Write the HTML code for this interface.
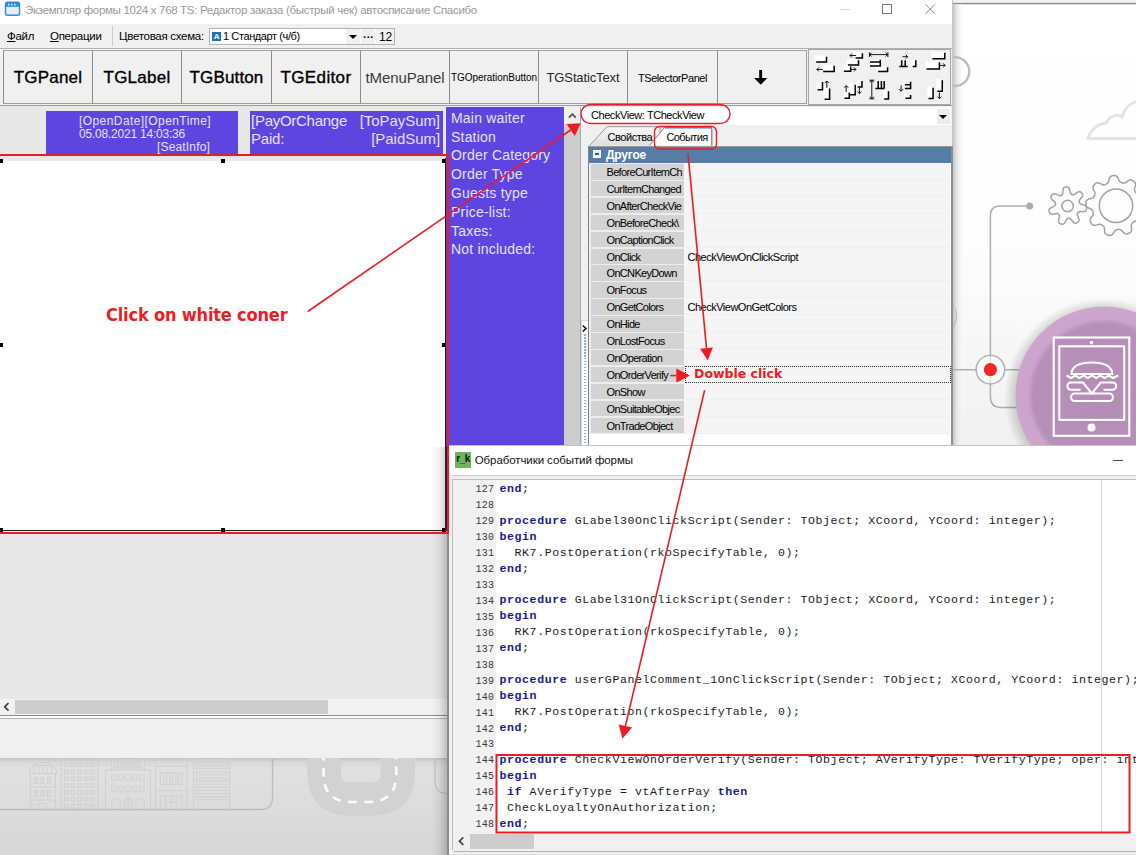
<!DOCTYPE html>
<html lang="ru">
<head>
<meta charset="utf-8">
<title>Экземпляр формы</title>
<style>
*{box-sizing:border-box;margin:0;padding:0}
html,body{width:1136px;height:855px;overflow:hidden;background:#e9e9e9;font-family:"Liberation Sans","DejaVu Sans",sans-serif;font-size:12px;color:#000}
.abs{position:absolute}
#stage{position:relative;width:1136px;height:855px;overflow:hidden;background:#e6e6e6}
/* ---------- background ---------- */
#bgR{left:952px;top:0;width:184px;height:450px;background:linear-gradient(#ffffff 0,#ffffff 55%,#f1f1f1 100%)}
#bgB{left:0;top:757px;width:450px;height:98px;background:linear-gradient(#e4e4e4,#d9d9d9)}
/* ---------- window 1 ---------- */
#w1{left:0;top:0;width:952.500px;height:757.500px;background:#f0f0f0;border-right:1px solid #c6c6c6}
#title1{left:0;top:0;width:952px;height:24px;background:#fff;color:#999;font-size:11.5px;line-height:20px;white-space:nowrap}
#menu1{left:0;top:24px;width:952px;height:24px;background:#f0f0f0;font-size:11.5px;letter-spacing:-0.28px;line-height:25.400px;white-space:nowrap}
.tb{top:50px;height:54px;padding-top:1.2px;border:1px solid #a0a0a0;border-left-color:#8c8c8c;background:#f0f0f0;text-align:center;white-space:nowrap;overflow:hidden;line-height:52px}
.pp{background:#5f45e0;color:#e4e0ff;white-space:nowrap;overflow:hidden}
/* property grid */
.gr{left:591px;width:359px;height:17px;white-space:nowrap}
.gr .k{position:absolute;left:0;top:0;width:93px;height:15.500px;background:#d3d3d3;overflow:hidden;font-size:11px;line-height:16px;padding-left:15.500px;letter-spacing:-0.67px}
.gr .v{position:absolute;left:93px;top:-1px;width:266px;height:17px;background:#f5f5f5;font-size:11px;line-height:18px;padding-left:3.500px;letter-spacing:-0.5px;border-bottom:1px solid #efefef}
/* ---------- window 2 ---------- */
#w2{left:447px;top:445px;width:689px;height:410px;background:#fff;border-left:2px solid #8c8c8c;border-top:1px solid #c4c4c4}
#code{left:4px;top:34px;width:684px;height:354px;font-family:"Liberation Mono","DejaVu Sans Mono",monospace;font-size:11.6px;letter-spacing:0.568px;line-height:16px;white-space:pre;overflow:hidden;color:#1a1a1a}
#code .l{position:absolute;left:0;height:16px;width:700px}
#code .n{position:absolute;left:0;top:1.5px;width:41.3px;text-align:right;font-size:10px;letter-spacing:0.3px;color:#3a3a3a}
#code .c{position:absolute;left:46.5px}
#code b{color:#1a1a8c;font-weight:bold}
svg{position:absolute;left:0;top:0;overflow:visible}
</style>
</head>
<body>
<div id="stage">
<!--BG-->
<div id="bgR" class="abs"></div>
<svg width="1136" height="855" viewBox="0 0 1136 855">
<defs><linearGradient id="gsh" x1="0" x2="1" y1="0" y2="0"><stop offset="0" stop-color="#bdbdbd"/><stop offset="0.35" stop-color="#e4e4e4"/><stop offset="1" stop-color="#ffffff" stop-opacity="0"/></linearGradient><radialGradient id="gpc" cx="0.5" cy="0.5" r="0.5"><stop offset="0" stop-color="#b48db5"/><stop offset="0.8" stop-color="#b690b8"/><stop offset="0.86" stop-color="#cba3cc"/><stop offset="1" stop-color="#cda6ce"/></radialGradient><radialGradient id="gps" cx="0.5" cy="0.5" r="0.5"><stop offset="0.8" stop-color="#000" stop-opacity="0.28"/><stop offset="1" stop-color="#000" stop-opacity="0"/></radialGradient><linearGradient id="gbr" x1="0" x2="0" y1="0" y2="1"><stop offset="0" stop-color="#ffffff"/><stop offset="0.55" stop-color="#fdfdfd"/><stop offset="1" stop-color="#f1f1f1"/></linearGradient></defs>
<rect x="952" y="0" width="184" height="446" fill="url(#gbr)"/>
<rect x="952" y="0" width="184" height="3" fill="#f0f0f0"/><rect x="952" y="2.900" width="184" height="1.400" fill="#8a8a8a"/>
<rect x="952" y="4.300" width="13" height="442" fill="url(#gsh)"/>
<circle cx="954.900" cy="71.600" r="14.400" fill="none" stroke="#b8babc" stroke-width="2.3"/>
<circle cx="940" cy="316" r="16.500" fill="none" stroke="#c4c4c4" stroke-width="1.5"/>
<path d="M1140 138.500H1087.500C1092 129 1098 123 1106 123.500C1109 116 1117 113.500 1122 117C1125 107 1132 101.500 1140 101" fill="none" stroke="#e3e3e3" stroke-width="2.800" stroke-linejoin="round"/>
<path d="M1085.9 206.0L1086.2 206.3L1086.4 206.7L1086.5 207.0L1086.6 207.3L1086.6 207.7L1086.7 208.0L1086.6 208.3L1086.6 208.7L1086.6 209.0L1086.5 209.3L1086.4 209.7L1086.3 210.0L1086.1 210.3L1085.9 210.6L1085.7 210.8L1085.4 211.1L1085.0 211.3L1084.5 211.5L1083.9 211.6L1083.2 211.7L1082.4 211.7L1081.6 211.7L1080.9 211.6L1080.3 211.6L1079.8 211.7L1079.3 211.7L1079.0 211.8L1078.8 211.9L1078.5 212.1L1078.4 212.2L1078.2 212.4L1078.1 212.5L1077.9 212.7L1077.8 212.9L1077.7 213.1L1077.6 213.2L1077.5 213.4L1077.4 213.7L1077.3 213.9L1077.3 214.1L1077.3 214.4L1077.3 214.8L1077.4 215.2L1077.6 215.7L1077.8 216.2L1078.1 216.9L1078.4 217.6L1078.7 218.3L1078.9 219.0L1079.0 219.6L1079.1 220.1L1079.0 220.6L1078.9 221.0L1078.7 221.3L1078.5 221.6L1078.3 221.8L1078.0 222.1L1077.8 222.3L1077.5 222.5L1077.2 222.6L1076.9 222.8L1076.6 222.9L1076.3 223.0L1076.0 223.1L1075.6 223.2L1075.2 223.2L1074.9 223.1L1074.5 223.0L1074.0 222.8L1073.6 222.4L1073.1 221.9L1072.6 221.4L1072.1 220.7L1071.7 220.1L1071.2 219.6L1070.9 219.2L1070.6 218.9L1070.3 218.6L1070.0 218.5L1069.8 218.4L1069.5 218.3L1069.3 218.3L1069.1 218.2L1068.9 218.2L1068.7 218.3L1068.5 218.3L1068.2 218.3L1068.0 218.3L1067.8 218.4L1067.6 218.5L1067.4 218.6L1067.2 218.7L1066.9 218.9L1066.7 219.2L1066.4 219.6L1066.1 220.1L1065.8 220.7L1065.4 221.4L1065.1 222.1L1064.7 222.7L1064.3 223.2L1063.9 223.6L1063.5 223.9L1063.1 224.1L1062.7 224.2L1062.4 224.2L1062.0 224.2L1061.7 224.2L1061.4 224.1L1061.0 224.0L1060.7 223.9L1060.4 223.8L1060.1 223.7L1059.8 223.5L1059.5 223.3L1059.3 223.1L1059.0 222.8L1058.8 222.5L1058.7 222.1L1058.5 221.7L1058.5 221.1L1058.5 220.5L1058.6 219.8L1058.8 219.0L1059.0 218.3L1059.2 217.6L1059.3 217.0L1059.4 216.5L1059.4 216.1L1059.4 215.8L1059.3 215.5L1059.2 215.3L1059.1 215.1L1059.0 214.9L1058.9 214.7L1058.7 214.5L1058.6 214.4L1058.5 214.2L1058.3 214.1L1058.1 214.0L1057.9 213.8L1057.7 213.7L1057.5 213.6L1057.2 213.6L1056.8 213.5L1056.4 213.5L1055.9 213.6L1055.2 213.7L1054.5 213.9L1053.8 214.0L1053.0 214.1L1052.3 214.1L1051.7 214.1L1051.2 214.0L1050.8 213.8L1050.5 213.6L1050.2 213.4L1050.0 213.1L1049.8 212.8L1049.6 212.6L1049.5 212.2L1049.3 211.9L1049.2 211.6L1049.2 211.3L1049.1 211.0L1049.1 210.6L1049.1 210.3L1049.1 209.9L1049.2 209.6L1049.3 209.2L1049.5 208.9L1049.9 208.5L1050.4 208.1L1050.9 207.8L1051.6 207.4L1052.3 207.1L1053.0 206.8L1053.6 206.5L1054.1 206.2L1054.4 206.0L1054.7 205.8L1054.9 205.6L1055.1 205.3L1055.2 205.1L1055.3 204.9L1055.3 204.7L1055.4 204.5L1055.4 204.3L1055.4 204.1L1055.5 203.9L1055.5 203.6L1055.5 203.4L1055.4 203.2L1055.4 203.0L1055.3 202.7L1055.1 202.4L1054.9 202.1L1054.5 201.7L1054.1 201.3L1053.6 200.9L1053.0 200.4L1052.4 199.9L1051.9 199.3L1051.5 198.8L1051.2 198.4L1051.0 197.9L1051.0 197.5L1050.9 197.1L1051.0 196.8L1051.1 196.5L1051.2 196.1L1051.3 195.8L1051.5 195.5L1051.7 195.3L1051.9 195.0L1052.1 194.7L1052.3 194.5L1052.6 194.3L1052.8 194.1L1053.2 193.9L1053.5 193.8L1053.9 193.7L1054.4 193.7L1054.9 193.8L1055.6 194.0L1056.2 194.2L1056.9 194.6L1057.6 194.9L1058.2 195.2L1058.8 195.5L1059.2 195.7L1059.6 195.8L1059.9 195.8L1060.2 195.8L1060.4 195.8L1060.7 195.7L1060.9 195.6L1061.1 195.6L1061.3 195.5L1061.4 195.3L1061.6 195.2L1061.8 195.1L1062.0 195.0L1062.1 194.8L1062.3 194.6L1062.4 194.4L1062.6 194.1L1062.7 193.8L1062.7 193.3L1062.8 192.8L1062.8 192.1L1062.9 191.4L1062.9 190.6L1063.0 189.9L1063.1 189.2L1063.3 188.6L1063.5 188.2L1063.7 187.8L1064.0 187.6L1064.3 187.3L1064.6 187.2L1064.9 187.1L1065.3 187.0L1065.6 186.9L1065.9 186.9L1066.3 186.8L1066.6 186.8L1066.9 186.9L1067.3 186.9L1067.6 187.0L1067.9 187.1L1068.3 187.3L1068.6 187.5L1068.9 187.8L1069.2 188.3L1069.4 188.8L1069.6 189.5L1069.8 190.2L1070.0 191.0L1070.1 191.7L1070.3 192.3L1070.4 192.8L1070.5 193.2L1070.7 193.5L1070.9 193.8L1071.1 194.0L1071.2 194.1L1071.4 194.2L1071.6 194.3L1071.8 194.4L1072.0 194.5L1072.2 194.6L1072.4 194.7L1072.6 194.7L1072.8 194.7L1073.1 194.8L1073.3 194.8L1073.6 194.7L1073.9 194.6L1074.3 194.4L1074.7 194.1L1075.2 193.8L1075.8 193.4L1076.4 192.9L1077.1 192.5L1077.7 192.1L1078.3 191.9L1078.8 191.7L1079.2 191.6L1079.6 191.7L1080.0 191.7L1080.3 191.9L1080.6 192.0L1080.9 192.2L1081.2 192.4L1081.4 192.7L1081.6 192.9L1081.9 193.2L1082.1 193.4L1082.3 193.7L1082.4 194.0L1082.5 194.3L1082.6 194.7L1082.7 195.0L1082.6 195.5L1082.5 195.9L1082.3 196.5L1082.0 197.0L1081.5 197.6L1081.0 198.2L1080.6 198.8L1080.1 199.3L1079.8 199.8L1079.5 200.2L1079.3 200.5L1079.2 200.8L1079.2 201.1L1079.2 201.3L1079.2 201.6L1079.2 201.8L1079.2 202.0L1079.3 202.2L1079.4 202.4L1079.4 202.6L1079.5 202.8L1079.6 203.0L1079.7 203.2L1079.9 203.4L1080.1 203.6L1080.3 203.8L1080.7 203.9L1081.1 204.1L1081.6 204.3L1082.3 204.5L1083.0 204.7L1083.7 204.9L1084.5 205.1L1085.1 205.4L1085.6 205.7z" fill="none" stroke="#9fa1a3" stroke-width="1.5"/><circle cx="1067.600" cy="206" r="5.700" fill="none" stroke="#9fa1a3" stroke-width="1.5"/>
<path d="M1140.2 205.8L1140.0 206.2L1139.9 206.6L1139.8 207.0L1139.8 207.5L1139.7 207.9L1139.7 208.3L1139.7 208.7L1139.7 209.1L1139.7 209.6L1139.8 210.0L1140.0 210.5L1140.3 211.0L1140.8 211.5L1141.4 212.1L1142.1 212.8L1142.8 213.5L1143.4 214.2L1143.8 214.8L1144.0 215.5L1144.1 216.0L1144.1 216.6L1144.0 217.1L1143.9 217.6L1143.7 218.1L1143.5 218.6L1143.2 219.1L1143.0 219.5L1142.7 220.0L1142.3 220.4L1141.9 220.8L1141.4 221.1L1140.8 221.3L1140.0 221.4L1139.1 221.4L1138.2 221.3L1137.2 221.2L1136.3 221.1L1135.6 221.1L1135.0 221.2L1134.5 221.3L1134.1 221.6L1133.8 221.8L1133.4 222.1L1133.1 222.3L1132.8 222.6L1132.5 222.9L1132.3 223.2L1132.0 223.6L1131.8 223.9L1131.5 224.3L1131.4 224.8L1131.3 225.4L1131.3 226.1L1131.4 227.0L1131.5 228.0L1131.6 228.9L1131.6 229.8L1131.5 230.6L1131.3 231.2L1131.0 231.7L1130.6 232.1L1130.2 232.5L1129.7 232.8L1129.3 233.0L1128.8 233.3L1128.3 233.5L1127.8 233.7L1127.3 233.8L1126.8 233.9L1126.2 233.9L1125.7 233.8L1125.0 233.6L1124.4 233.2L1123.7 232.6L1123.0 231.9L1122.3 231.2L1121.7 230.6L1121.2 230.1L1120.7 229.8L1120.2 229.6L1119.8 229.5L1119.3 229.5L1118.9 229.5L1118.5 229.5L1118.1 229.5L1117.7 229.6L1117.2 229.6L1116.8 229.7L1116.4 229.8L1116.0 230.0L1115.6 230.3L1115.1 230.6L1114.7 231.2L1114.2 231.9L1113.6 232.7L1113.1 233.6L1112.5 234.3L1111.9 234.8L1111.4 235.1L1110.8 235.3L1110.3 235.3L1109.7 235.3L1109.2 235.3L1108.7 235.2L1108.2 235.1L1107.7 234.9L1107.2 234.7L1106.7 234.5L1106.2 234.2L1105.8 233.9L1105.4 233.5L1105.0 232.9L1104.8 232.2L1104.6 231.3L1104.6 230.3L1104.5 229.3L1104.5 228.5L1104.3 227.8L1104.1 227.2L1103.9 226.7L1103.6 226.4L1103.3 226.1L1103.0 225.8L1102.7 225.5L1102.3 225.3L1102.0 225.1L1101.6 224.8L1101.3 224.6L1100.9 224.5L1100.5 224.3L1100.0 224.3L1099.4 224.3L1098.7 224.4L1097.8 224.6L1096.9 224.9L1095.9 225.2L1095.0 225.3L1094.3 225.4L1093.6 225.2L1093.1 225.0L1092.6 224.7L1092.2 224.4L1091.8 224.0L1091.5 223.6L1091.2 223.2L1090.9 222.7L1090.6 222.3L1090.4 221.8L1090.2 221.3L1090.1 220.8L1090.1 220.2L1090.2 219.5L1090.5 218.8L1090.9 218.0L1091.5 217.2L1092.1 216.5L1092.6 215.7L1092.9 215.1L1093.2 214.6L1093.3 214.1L1093.3 213.6L1093.3 213.2L1093.2 212.8L1093.1 212.4L1093.0 212.0L1092.9 211.6L1092.8 211.2L1092.6 210.8L1092.4 210.4L1092.2 210.0L1091.8 209.6L1091.4 209.3L1090.8 208.9L1090.0 208.5L1089.1 208.2L1088.2 207.7L1087.4 207.3L1086.8 206.8L1086.4 206.3L1086.1 205.8L1085.9 205.3L1085.8 204.7L1085.8 204.2L1085.8 203.7L1085.8 203.2L1085.9 202.6L1086.0 202.1L1086.1 201.6L1086.3 201.1L1086.5 200.6L1086.9 200.1L1087.4 199.7L1088.1 199.4L1088.9 199.0L1089.9 198.8L1090.8 198.6L1091.7 198.4L1092.4 198.1L1092.9 197.8L1093.3 197.5L1093.6 197.2L1093.8 196.8L1094.1 196.5L1094.2 196.1L1094.4 195.7L1094.6 195.4L1094.8 195.0L1094.9 194.6L1095.0 194.2L1095.1 193.7L1095.0 193.2L1094.9 192.6L1094.7 191.9L1094.3 191.2L1093.8 190.3L1093.4 189.4L1093.1 188.5L1093.0 187.8L1093.0 187.1L1093.1 186.6L1093.3 186.1L1093.6 185.6L1093.9 185.2L1094.2 184.8L1094.6 184.4L1095.0 184.0L1095.4 183.7L1095.8 183.4L1096.3 183.1L1096.8 182.9L1097.3 182.8L1098.0 182.8L1098.7 182.9L1099.6 183.2L1100.5 183.6L1101.4 184.1L1102.1 184.5L1102.8 184.7L1103.4 184.8L1103.9 184.9L1104.4 184.8L1104.8 184.7L1105.2 184.6L1105.6 184.4L1105.9 184.2L1106.3 184.0L1106.7 183.9L1107.0 183.6L1107.4 183.4L1107.7 183.1L1108.0 182.7L1108.3 182.2L1108.6 181.5L1108.8 180.6L1109.0 179.7L1109.2 178.7L1109.6 177.9L1109.9 177.2L1110.3 176.7L1110.8 176.3L1111.3 176.1L1111.8 175.9L1112.3 175.8L1112.8 175.7L1113.4 175.6L1113.9 175.6L1114.4 175.6L1114.9 175.6L1115.5 175.7L1116.0 175.9L1116.5 176.2L1117.0 176.6L1117.5 177.2L1117.9 178.0L1118.4 178.9L1118.7 179.8L1119.1 180.6L1119.5 181.2L1119.8 181.6L1120.2 182.0L1120.6 182.2L1121.0 182.4L1121.4 182.6L1121.8 182.7L1122.2 182.8L1122.6 182.9L1123.0 183.0L1123.4 183.1L1123.8 183.1L1124.3 183.1L1124.8 183.0L1125.3 182.7L1125.9 182.4L1126.7 181.9L1127.4 181.3L1128.2 180.7L1129.0 180.3L1129.7 180.0L1130.4 179.9L1131.0 179.9L1131.5 180.0L1132.0 180.2L1132.5 180.4L1132.9 180.7L1133.4 181.0L1133.8 181.3L1134.2 181.6L1134.6 182.0L1134.9 182.4L1135.2 182.9L1135.4 183.4L1135.6 184.1L1135.5 184.8L1135.4 185.7L1135.1 186.7L1134.8 187.6L1134.6 188.5L1134.5 189.2L1134.5 189.8L1134.5 190.3L1134.7 190.7L1134.8 191.1L1135.0 191.4L1135.3 191.8L1135.5 192.1L1135.7 192.5L1136.0 192.8L1136.3 193.1L1136.6 193.4L1136.9 193.7L1137.4 193.9L1138.0 194.1L1138.7 194.3L1139.5 194.3L1140.5 194.4L1141.5 194.4L1142.4 194.6L1143.1 194.8L1143.7 195.2L1144.1 195.6L1144.4 196.0L1144.7 196.5L1144.9 197.0L1145.1 197.5L1145.3 198.0L1145.4 198.5L1145.5 199.0L1145.5 199.5L1145.5 200.1L1145.5 200.6L1145.3 201.2L1145.0 201.7L1144.5 202.3L1143.8 202.9L1142.9 203.4L1142.1 204.0L1141.4 204.5L1140.8 204.9L1140.5 205.4z" fill="none" stroke="#9fa1a3" stroke-width="1.5"/><circle cx="1116" cy="205.800" r="16.700" fill="none" stroke="#9fa1a3" stroke-width="1.5"/>
<path d="M1029.700 206H1000Q990.400 206 990.400 216V397Q990.400 407.500 1001 407.500H1020" fill="none" stroke="#adb0b2" stroke-width="1.5"/>
<circle cx="1029.700" cy="206" r="3.500" fill="#a9abad"/>
<path d="M952 369.700H976M1005 369.700H1020" stroke="#adb0b2" stroke-width="1.4"/>
<circle cx="990.400" cy="369.700" r="14.300" fill="#fff" fill-opacity="0.6" stroke="#adb0b2" stroke-width="1.4"/><circle cx="990.400" cy="369.700" r="6.600" fill="#ee2a24"/>
<circle cx="1104" cy="398" r="100" fill="url(#gps)"/>
<circle cx="1104" cy="395" r="88.500" fill="url(#gpc)"/>
<g fill="none" stroke="#fff" stroke-width="2.1"><rect x="1053.700" y="337.500" width="75.600" height="98.300"/><rect x="1059.300" y="346.300" width="64.900" height="73.600"/><path d="M1071.500 374Q1072 362.500 1091.800 362.500Q1111.600 362.500 1112.300 374z"/><path d="M1066.500 375.500l4.500 2.500 4.200-2.300 4.200 2.300 4.200-2.300 4.200 2.300 4.200-2.300 4.200 2.300 4.200-2.300 4.200 2.300 4.200-2.300 4.500 2.300 5-2.700"/><path d="M1071 382.500h12l8.800 11 8.800-11h12a3.600 3.600 0 0 1 0 7.200h-9M1071 382.500a3.600 3.600 0 0 0 0 7.200h9.500"/><rect x="1071" y="393.500" width="42" height="7.500" rx="3.700"/></g>
<circle cx="1091.500" cy="342.600" r="1.800" fill="#fff"/><circle cx="1091.500" cy="427.600" r="4" fill="#fff"/>
</svg>
<div id="bgB" class="abs"></div>
<svg width="1136" height="855" viewBox="0 0 1136 855">
<defs><linearGradient id="gbb" x1="0" x2="0" y1="0" y2="1"><stop offset="0" stop-color="#bdbdbd"/><stop offset="0.05" stop-color="#d8d8d8"/><stop offset="0.12" stop-color="#e0e0e0"/><stop offset="1" stop-color="#d7d7d7"/></linearGradient></defs>
<rect x="0" y="757" width="448" height="98" fill="url(#gbb)"/>
<path d="M307.200 757V771Q307.200 815.800 352 815.800H370Q415 815.800 415 771V757H380.800V774.200Q380.800 782.200 372.800 782.200H349Q341 782.200 341 774.200V757z" fill="#d2d2d2"/>
<path d="M323.500 757V774Q323.500 802 351.500 802H368.300Q396.300 802 396.300 774V757" fill="none" stroke="#fbfbfb" stroke-width="2.600" stroke-dasharray="8.500 7.500" stroke-dashoffset="5"/>
<path d="M435 757V781Q435 793.400 447 793.400" fill="none" stroke="#c0c0c0" stroke-width="1.1"/>
<path d="M0 809.500H260.500Q272.500 809.500 272.500 797.500V757" fill="none" stroke="#bcbcbc" stroke-width="1.3"/>
<g fill="none" stroke="#d0d0d0" stroke-width="1">
<path d="M30.500 809V773.500M55.500 809V773.500M29 773.500H57M29 773.500Q30 765.500 37 765.500H49Q56 765.500 57 773.500M36 765.500V762.500H50V765.500M34 773V767M39 773.500V766M43 773.500V765.500M47 773.500V766M52 773V767M30.500 787H55.500M30.500 800H55.500M38.500 809V803.500H46V809"/>
<rect x="35" y="777.5" width="2.500" height="6"/>
<rect x="41" y="777.5" width="2.500" height="6"/>
<rect x="47.5" y="777.5" width="2.500" height="6"/>
<rect x="35" y="790.5" width="2.500" height="6"/>
<rect x="41" y="790.5" width="2.500" height="6"/>
<rect x="47.5" y="790.5" width="2.500" height="6"/>
<path d="M61 809V757M98 809V757"/>
<rect x="64.5" y="763.0" width="3.500" height="3.500"/>
<rect x="71.1" y="763.0" width="3.500" height="3.500"/>
<rect x="77.7" y="763.0" width="3.500" height="3.500"/>
<rect x="84.3" y="763.0" width="3.500" height="3.500"/>
<rect x="90.9" y="763.0" width="3.500" height="3.500"/>
<rect x="64.5" y="769.9" width="3.500" height="3.500"/>
<rect x="71.1" y="769.9" width="3.500" height="3.500"/>
<rect x="77.7" y="769.9" width="3.500" height="3.500"/>
<rect x="84.3" y="769.9" width="3.500" height="3.500"/>
<rect x="90.9" y="769.9" width="3.500" height="3.500"/>
<rect x="64.5" y="776.8" width="3.500" height="3.500"/>
<rect x="71.1" y="776.8" width="3.500" height="3.500"/>
<rect x="77.7" y="776.8" width="3.500" height="3.500"/>
<rect x="84.3" y="776.8" width="3.500" height="3.500"/>
<rect x="90.9" y="776.8" width="3.500" height="3.500"/>
<rect x="64.5" y="783.7" width="3.500" height="3.500"/>
<rect x="71.1" y="783.7" width="3.500" height="3.500"/>
<rect x="77.7" y="783.7" width="3.500" height="3.500"/>
<rect x="84.3" y="783.7" width="3.500" height="3.500"/>
<rect x="90.9" y="783.7" width="3.500" height="3.500"/>
<rect x="64.5" y="790.6" width="3.500" height="3.500"/>
<rect x="71.1" y="790.6" width="3.500" height="3.500"/>
<rect x="77.7" y="790.6" width="3.500" height="3.500"/>
<rect x="84.3" y="790.6" width="3.500" height="3.500"/>
<rect x="90.9" y="790.6" width="3.500" height="3.500"/>
<rect x="64.5" y="797.5" width="3.500" height="3.500"/>
<rect x="71.1" y="797.5" width="3.500" height="3.500"/>
<rect x="77.7" y="797.5" width="3.500" height="3.500"/>
<rect x="84.3" y="797.5" width="3.500" height="3.500"/>
<rect x="90.9" y="797.5" width="3.500" height="3.500"/>
<rect x="64.5" y="804.4" width="3.500" height="3.500"/>
<rect x="71.1" y="804.4" width="3.500" height="3.500"/>
<rect x="77.7" y="804.4" width="3.500" height="3.500"/>
<rect x="84.3" y="804.4" width="3.500" height="3.500"/>
<rect x="90.9" y="804.4" width="3.500" height="3.500"/>
<path d="M105.500 809V770H150.500V809M111.500 770V757M144.500 770V757M113 768H143"/>
<rect x="114.5" y="759.500" width="2.500" height="7"/>
<rect x="118.5" y="759.500" width="2.500" height="7"/>
<rect x="122.5" y="759.500" width="2.500" height="7"/>
<rect x="126.5" y="759.500" width="2.500" height="7"/>
<rect x="130.5" y="759.500" width="2.500" height="7"/>
<rect x="134.5" y="759.500" width="2.500" height="7"/>
<rect x="138.5" y="759.500" width="2.500" height="7"/>
<rect x="111.5" y="774.5" width="4.500" height="6" rx="1.5"/>
<rect x="118.5" y="774.5" width="4.500" height="6" rx="1.5"/>
<rect x="125.5" y="774.5" width="4.500" height="6" rx="1.5"/>
<rect x="132.5" y="774.5" width="4.500" height="6" rx="1.5"/>
<rect x="139.5" y="774.5" width="4.500" height="6" rx="1.5"/>
<rect x="111.5" y="786" width="4.500" height="6" rx="1.5"/>
<rect x="118.5" y="786" width="4.500" height="6" rx="1.5"/>
<rect x="125.5" y="786" width="4.500" height="6" rx="1.5"/>
<rect x="132.5" y="786" width="4.500" height="6" rx="1.5"/>
<rect x="139.5" y="786" width="4.500" height="6" rx="1.5"/>
<path d="M112 809V803Q112 798 116.2 798Q120.4 798 120.4 803V809"/>
<path d="M124 809V803Q124 798 128.2 798Q132.4 798 132.4 803V809"/>
<path d="M136 809V803Q136 798 140.2 798Q144.4 798 144.4 803V809"/>
<path d="M128.200 798V809M124 803H132.400"/>
<path d="M155.500 809V757M187 809V757M155.500 766.500H187M155.500 790.500H187"/>
<rect x="160.5" y="772.500" width="3.500" height="12"/>
<rect x="166.5" y="772.500" width="3.500" height="12"/>
<rect x="172.5" y="772.500" width="3.500" height="12"/>
<rect x="178.5" y="772.500" width="3.500" height="12"/>
<path d="M160.500 809V796H182V809M165 796V809M171 796V809M177 796V809M165 802H177"/>
<path d="M193.500 809V757M229.500 809V757"/>
<rect x="196" y="759.5" width="31" height="3"/>
<rect x="196" y="765.7" width="31" height="3"/>
<rect x="196" y="771.9" width="31" height="3"/>
<rect x="196" y="778.1" width="31" height="3"/>
<rect x="196" y="784.3" width="31" height="3"/>
<rect x="196" y="790.5" width="31" height="3"/>
<rect x="196" y="796.7" width="31" height="3"/>
</g>
</svg>
<!--W1-->
<div id="w1" class="abs">
<div id="title1" class="abs">
<svg width="24" height="24" viewBox="0 1.200 24 24"><rect x="5.5" y="3.5" width="14" height="13" rx="2" fill="#e3f0fc" stroke="#2b8ae6" stroke-width="1.4"/><path d="M5.5 8V5.5a2 2 0 0 1 2-2h10a2 2 0 0 1 2 2V8z" fill="#2b8ae6"/><rect x="8" y="5" width="1.5" height="1.5" fill="#fff"/><rect x="11" y="5" width="1.5" height="1.5" fill="#fff"/><rect x="14" y="5" width="1.5" height="1.5" fill="#fff"/></svg>
<span class="abs" style="left:25px;top:-0.500px;letter-spacing:-0.3px">Экземпляр формы 1024 x 768 TS: Редактор заказа (быстрый чек) автосписание Спасибо</span>
<div class="abs" style="left:840px;top:9px;width:10px;height:1px;background:#d8d8d8"></div>
<div class="abs" style="left:882px;top:4px;width:10px;height:10px;border:1px solid #7a7a7a"></div>
<svg width="952" height="24"><path d="M925.500 4.300l9.500 9.500M935 4.300l-9.500 9.500" stroke="#8a8a8a" stroke-width="1" fill="none"/></svg>
</div>
<div id="menu1" class="abs">
<span class="abs" style="left:7px;top:0"><u>Ф</u>айл</span>
<span class="abs" style="left:50px;top:0"><u>О</u>перации</span>
<div class="abs" style="left:112px;top:2px;width:1px;height:20px;background:#c8c8c8"></div>
<span class="abs" style="left:119px;top:0">Цветовая схема:</span>
<div class="abs" style="left:209px;top:4px;width:186px;height:17px;background:#fff;border:1px solid #b4b4b4"></div>
<div class="abs" style="left:212px;top:8px;width:9px;height:9px;background:#1f6fc2;color:#fff;font-size:8px;line-height:9.500px;text-align:center;font-weight:bold">A</div>
<span class="abs" style="left:223px;top:0;font-size:11px;letter-spacing:-0.4px">1 Стандарт (ч/б)</span>
<div class="abs" style="left:346px;top:5px;width:14px;height:15px;background:#f0f0f0"></div>
<div class="abs" style="left:349px;top:11px;width:0;height:0;border-left:4px solid transparent;border-right:4px solid transparent;border-top:4px solid #000"></div>
<div class="abs" style="left:361px;top:5px;width:14px;height:15px;background:#f0f0f0"></div>
<span class="abs" style="left:363px;top:1px;font-size:11px;font-weight:bold;letter-spacing:0px">···</span>
<div class="abs" style="left:376px;top:5px;width:18px;height:15px;background:#f0f0f0"></div>
<span class="abs" style="left:379px;top:1px;font-size:12px">12</span>
</div>
<!--TOOLBAR-->
<div class="abs" style="left:0;top:48px;width:952px;height:59px;background:#f0f0f0"></div>
<div class="abs" style="left:0;top:48px;width:952px;height:1px;background:#b0b0b0"></div><div class="abs" style="left:0;top:49px;width:952px;height:1px;background:#fafafa"></div>
<div class="abs" style="left:0;top:105px;width:952px;height:1px;background:#9c9c9c"></div>
<div class="abs tb" style="left:3px;width:90px;font-size:17px;letter-spacing:0.2px;color:#000;-webkit-text-stroke:0.35px #000">TGPanel</div>
<div class="abs tb" style="left:92px;width:90px;font-size:17px;letter-spacing:0.26px;color:#000;-webkit-text-stroke:0.35px #000">TGLabel</div>
<div class="abs tb" style="left:181px;width:91px;font-size:17px;letter-spacing:0.15px;color:#000;-webkit-text-stroke:0.35px #000">TGButton</div>
<div class="abs tb" style="left:271px;width:90px;font-size:17px;letter-spacing:0.37px;color:#000;-webkit-text-stroke:0.35px #000">TGEditor</div>
<div class="abs tb" style="left:360px;width:90px;font-size:15px;letter-spacing:-0.11px;color:#3a3a3a">tMenuPanel</div>
<div class="abs tb" style="left:449px;width:90px;font-size:10px;letter-spacing:-0.04px;color:#000">TGOperationButton</div>
<div class="abs tb" style="left:538px;width:90px;font-size:13px;letter-spacing:-0.12px;color:#262626">TGStaticText</div>
<div class="abs tb" style="left:627px;width:91px;font-size:11px;letter-spacing:-0.44px;color:#000">TSelectorPanel</div>
<div class="abs tb" style="left:717px;width:90px;font-size:12px;letter-spacing:0px;color:#000"></div>
<svg width="952" height="110"><path d="M759.200 70h2.900v8h5.200l-6.600 6.800-6.600-6.800h5.100z" fill="#000"/></svg>
<div class="abs" style="left:808px;top:49px;width:143px;height:56px;border:1px solid #a6a6a6;background:#f0f0f0"></div>
<svg width="960" height="110" viewBox="0 0 960 110"><rect x="815.1" y="55.5" width="10.3" height="5.4" fill="#fff"/><rect x="822.1" y="64.7" width="11.0" height="5.6" fill="#fff"/><rect x="854.5" y="52.0" width="6.8" height="4.9" fill="#fff"/><rect x="846.8" y="59.1" width="10.6" height="4.9" fill="#fff"/><rect x="842.8" y="65.4" width="6.8" height="4.6" fill="#fff"/><rect x="870.0" y="59.8" width="9.2" height="5.4" fill="#fff"/><rect x="877.0" y="66.1" width="9.4" height="4.2" fill="#fff"/><rect x="911.5" y="59.1" width="3.1" height="6.3" fill="#fff"/><rect x="931.3" y="51.6" width="12.4" height="6.1" fill="#fff"/><rect x="925.4" y="61.2" width="13.0" height="6.8" fill="#fff"/><rect x="816.5" y="80.9" width="4.9" height="7.7" fill="#fff"/><rect x="823.5" y="87.2" width="4.9" height="10.8" fill="#fff"/><rect x="843.2" y="91.5" width="4.9" height="5.6" fill="#fff"/><rect x="848.9" y="83.7" width="5.2" height="9.9" fill="#fff"/><rect x="856.6" y="79.8" width="4.2" height="6.1" fill="#fff"/><rect x="883.1" y="90.1" width="4.2" height="7.7" fill="#fff"/><rect x="904.2" y="93.9" width="5.2" height="3.2" fill="#fff"/><rect x="936.2" y="79.2" width="4.9" height="10.8" fill="#fff"/><rect x="927.3" y="86.5" width="4.6" height="11.0" fill="#fff"/><path d="M816.2 62.0H826.5V56.7M823.2 71.5H834.2V65.8M855.6 58.1H862.4V53.2M847.9 65.1H858.5V60.2M843.9 71.2H850.7V66.5M870.0 62.0H880.3M870.0 66.1H880.3V59.8M878.2 71.5H887.6V67.2M899.3 66.5H907.7M901.7 60.2V66.5M905.2 60.2V66.5M912.7 66.5H915.8V60.2M932.4 58.8H944.8V52.7M926.5 69.1H939.4V62.3M817.6 89.8H822.5V82.0M824.6 99.2H829.6V88.4M844.4 98.2H849.3V92.6M850.0 94.7H855.2V84.8M857.7 87.0H862.0V80.9M875.4 88.4H884.2M878.2 80.9V88.4M881.4 80.9V88.4M884.2 80.9V88.4M884.2 98.9H888.5V91.2M904.9 84.8H910.6M904.9 88.6H910.6V81.7M905.4 98.2H910.6V95.0M937.3 91.2H942.3V80.3M928.5 98.6H933.1V87.7" fill="none" stroke="#000" stroke-width="1.5"/><path d="M822.8 69.4L816.9 69.4M818.9 67.4L816.9 69.4L818.9 71.4M856.1 55.5L850.0 55.5M852.0 53.5L850.0 55.5L852.0 57.5M850.7 69.4L855.9 69.4M853.9 71.4L855.9 69.4L853.9 67.4M878.9 54.6L869.7 54.6M871.7 52.6L869.7 54.6L871.7 56.6M878.9 54.6L887.6 54.6M885.6 56.6L887.6 54.6L885.6 52.6M869.4 52.2V57.0M887.9 52.2V57.0M902.5 56.7L907.7 56.7M905.7 58.7L907.7 56.7L905.7 54.7M939.4 65.4L945.1 65.4M943.1 67.4L945.1 65.4L943.1 63.4M826.8 87.9L826.8 81.0M828.8 83.0L826.8 81.0L824.8 83.0M846.2 92.2L846.2 85.7M848.2 87.7L846.2 85.7L844.2 87.7M859.4 87.4L859.4 93.6M857.4 91.6L859.4 93.6L861.4 91.6M871.8 89.1L871.8 80.3M873.8 82.3L871.8 80.3L869.8 82.3M871.8 89.1L871.8 98.6M869.8 96.6L871.8 98.6L873.8 96.6M869.3 80.2H874.4M869.3 98.8H874.4M901.1 85.3L901.1 91.2M899.1 89.2L901.1 91.2L903.1 89.2M939.4 92.3L939.4 98.6M937.4 96.6L939.4 98.6L941.4 96.6" fill="none" stroke="#000" stroke-width="0.9"/></svg>
<!--PANELS-->
<div class="abs" style="left:0;top:106px;width:447px;height:593px;background:#e8e8e8"></div>
<div class="abs pp" style="left:46px;top:111px;width:192px;height:45px;font-size:12px;line-height:13px"><span class="abs" style="left:33px;top:4px;letter-spacing:0.42px">[OpenDate][OpenTime]</span><span class="abs" style="left:33px;top:17px;letter-spacing:-0.22px">05.08.2021 14:03:36</span><span class="abs" style="left:111px;top:30px;letter-spacing:0.16px">[SeatInfo]</span></div>
<div class="abs pp" style="left:250px;top:111px;width:193px;height:45px;font-size:15px;line-height:18px"><span class="abs" style="left:1px;top:1px;letter-spacing:-0.27px">[PayOrChange</span><span class="abs" style="right:3px;top:1px;letter-spacing:-0.05px">[ToPaySum]</span><span class="abs" style="left:1px;top:19px;letter-spacing:-0.2px">Paid:</span><span class="abs" style="right:3px;top:19px;letter-spacing:-0.05px">[PaidSum]</span></div>
<div class="abs" style="left:0;top:161px;width:446px;height:370px;background:#fff;border-bottom:1px solid #222"></div>
<div class="abs" style="left:-1px;top:159px;width:4px;height:4px;background:#000"></div>
<div class="abs" style="left:220.800px;top:159px;width:4px;height:3.700px;background:#000"></div>
<div class="abs" style="left:442px;top:159px;width:4px;height:4px;background:#000"></div>
<div class="abs" style="left:-1px;top:343px;width:4px;height:4px;background:#000"></div>
<div class="abs" style="left:442px;top:343px;width:4px;height:4px;background:#000"></div>
<div class="abs" style="left:-1px;top:528.200px;width:4px;height:3.800px;background:#000"></div>
<div class="abs" style="left:220.800px;top:528.200px;width:4px;height:3.800px;background:#000"></div>
<div class="abs" style="left:442px;top:528.200px;width:4px;height:3.800px;background:#000"></div>
<div class="abs pp" style="left:446px;top:107px;width:118px;height:340px;font-size:14px;line-height:18.6px;letter-spacing:0.2px">
<span class="abs" style="left:5px;top:1.8px">Main waiter</span>
<span class="abs" style="left:5px;top:20.6px">Station</span>
<span class="abs" style="left:5px;top:39.4px">Order Category</span>
<span class="abs" style="left:5px;top:58.2px">Order Type</span>
<span class="abs" style="left:5px;top:77.0px">Guests type</span>
<span class="abs" style="left:5px;top:95.8px">Price-list:</span>
<span class="abs" style="left:5px;top:114.6px">Taxes:</span>
<span class="abs" style="left:5px;top:133.4px">Not included:</span>
</div>
<div class="abs" style="left:445.300px;top:158px;width:1.200px;height:373px;background:#1a1630"></div>
<div class="abs" style="left:564px;top:107px;width:16px;height:340px;background:#cdcdcd"></div>
<div class="abs" style="left:564px;top:107px;width:16px;height:17px;background:#f0f0f0"></div>
<svg width="600" height="130"><path d="M568.800 117.600l3.500-3.500 3.500 3.500" stroke="#505050" stroke-width="1.6" fill="none"/></svg>
<div class="abs" style="left:580px;top:107px;width:9px;height:340px;background:#f0f0f0;border-left:1px solid #a8a8a8"></div>
<div class="abs" style="left:588px;top:146px;width:1px;height:300px;background:#828282"></div>
<div class="abs" style="left:581px;top:320px;width:7px;height:127px;background:#fbfbfb;border-left:1px solid #d8d8d8;border-top:1px solid #d8d8d8"></div>
<div class="abs" style="left:584px;top:334px;width:2px;height:113px;background:repeating-linear-gradient(#7fb2e8 0 1.5px,#fff 1.5px 3px)"></div>
<svg width="600" height="340"><path d="M582.800 325.500l3.200 3-3.200 3" stroke="#000" stroke-width="1.4" fill="none"/></svg>
<div class="abs" style="left:581px;top:107px;width:370px;height:18px;background:#fff"></div>
<span class="abs" style="left:591px;top:107.800px;font-size:11px;line-height:14px;letter-spacing:-0.44px;white-space:nowrap">CheckView: TCheckView</span>
<div class="abs" style="left:937px;top:109px;width:13px;height:15px;background:#ececec"></div>
<div class="abs" style="left:939px;top:115px;width:0;height:0;border-left:4px solid transparent;border-right:4px solid transparent;border-top:4px solid #000"></div>
<svg width="952" height="160"><defs><linearGradient id="gt1" x1="0" x2="0" y1="0" y2="1"><stop offset="0" stop-color="#f8f8f8"/><stop offset="1" stop-color="#dedede"/></linearGradient></defs><path d="M589.500 145.500L607 126.700H660V145.500" fill="url(#gt1)" stroke="#9a9a9a" stroke-width="1"/><path d="M649.500 145.500L664.500 127.500H711.500V145.500" fill="#fbfbfb" stroke="#8c8c8c" stroke-width="1"/><path d="M712.500 129V145.500" stroke="#c4c4c4" stroke-width="1.2"/><path d="M665 127.800H711.500" stroke="#3c8ad8" stroke-width="1.6"/></svg>
<span class="abs" style="left:607.500px;top:129.500px;font-size:11px;line-height:14px;letter-spacing:-0.45px;white-space:nowrap">Свойства</span>
<span class="abs" style="left:666.500px;top:129.500px;font-size:11px;line-height:14px;letter-spacing:-0.63px;white-space:nowrap">События</span>
<div class="abs" style="left:589px;top:146px;width:362px;height:301px;background:#fff"></div>
<div class="abs" style="left:589px;top:163px;width:95px;height:270.500px;background:#ededed"></div>
<div class="abs" style="left:589px;top:146px;width:362px;height:17px;background:#557da8;border-top:1px solid #9a9a9a"></div>
<div class="abs" style="left:593px;top:150px;width:8px;height:8px;background:#e8eef5;border:1px solid #fff"></div><div class="abs" style="left:595px;top:153px;width:4px;height:2px;background:#3a5f8a"></div>
<span class="abs" style="left:606px;top:148px;font-size:12px;font-weight:bold;line-height:14px;color:#fff;letter-spacing:-0.21px">Другое</span>
<div class="abs gr" style="top:164.0px"><div class="k">BeforeCurItemCh</div><div class="v"></div></div>
<div class="abs gr" style="top:180.9px"><div class="k">CurItemChanged</div><div class="v"></div></div>
<div class="abs gr" style="top:197.8px"><div class="k">OnAfterCheckVie</div><div class="v"></div></div>
<div class="abs gr" style="top:214.7px"><div class="k">OnBeforeCheck\</div><div class="v"></div></div>
<div class="abs gr" style="top:231.6px"><div class="k">OnCaptionClick</div><div class="v"></div></div>
<div class="abs gr" style="top:248.5px"><div class="k">OnClick</div><div class="v">CheckViewOnClickScript</div></div>
<div class="abs gr" style="top:265.4px"><div class="k">OnCNKeyDown</div><div class="v"></div></div>
<div class="abs gr" style="top:282.3px"><div class="k">OnFocus</div><div class="v"></div></div>
<div class="abs gr" style="top:299.2px"><div class="k">OnGetColors</div><div class="v">CheckViewOnGetColors</div></div>
<div class="abs gr" style="top:316.1px"><div class="k">OnHide</div><div class="v"></div></div>
<div class="abs gr" style="top:333.0px"><div class="k">OnLostFocus</div><div class="v"></div></div>
<div class="abs gr" style="top:349.9px"><div class="k">OnOperation</div><div class="v"></div></div>
<div class="abs gr" style="top:366.8px"><div class="k">OnOrderVerify</div><div class="v"></div></div>
<div class="abs gr" style="top:383.7px"><div class="k">OnShow</div><div class="v"></div></div>
<div class="abs gr" style="top:400.6px"><div class="k">OnSuitableObjec</div><div class="v"></div></div>
<div class="abs gr" style="top:417.5px"><div class="k">OnTradeObject</div><div class="v"></div></div>
<div class="abs" style="left:685px;top:366px;width:266px;height:17px;border:1px dotted #333"></div>
<div class="abs" style="left:951px;top:146px;width:1.500px;height:300px;background:#8a8f98"></div>
<!--BOTTOM1-->
<div class="abs" style="left:0;top:699px;width:448px;height:16px;background:#f2f2f2"></div>
<div class="abs" style="left:15px;top:700.300px;width:313px;height:13.600px;background:#cdcdcd"></div>
<svg width="40" height="720"><path d="M8.500 703l-3.800 3.800 3.800 3.800" stroke="#404040" stroke-width="1.7" fill="none"/></svg>
<div class="abs" style="left:0;top:714.800px;width:448px;height:1.200px;background:#8c8c8c"></div>
<div class="abs" style="left:0;top:716px;width:448px;height:1.700px;background:#fcfcfc"></div>
<div class="abs" style="left:0;top:717.700px;width:448px;height:1px;background:#b4b4b4"></div>
<div class="abs" style="left:0;top:718.500px;width:448px;height:39px;background:#f0f0f0"></div>
</div>
<div class="abs" style="left:431px;top:447px;width:16px;height:408px;background:linear-gradient(90deg,rgba(0,0,0,0),rgba(0,0,0,0.05) 50%,rgba(0,0,0,0.2))"></div>
<div class="abs" style="left:445.300px;top:446px;width:1.900px;height:85px;background:#26243c"></div>
<!--W2-->
<div id="w2" class="abs">
<div class="abs" style="left:6px;top:6px;width:16px;height:16px;background:#6fb55d;color:#111;font-size:10px;font-weight:bold;line-height:13px;text-align:center;letter-spacing:-0.5px">r_k</div>
<span class="abs" style="left:25.700px;top:6.800px;font-size:11.5px;line-height:14px;letter-spacing:-0.08px;white-space:nowrap;color:#111">Обработчики событий формы</span>
<div class="abs" style="left:664px;top:14px;width:10px;height:1px;background:#444"></div>
<div class="abs" style="left:0;top:29px;width:689px;height:5px;background:#f0f0f0;border-top:1px solid #d0d0d0"></div>
<div class="abs" style="left:0;top:29px;width:3px;height:381px;background:#f0f0f0"></div>
<div class="abs" style="left:3px;top:33px;width:685px;height:1px;background:#bcbcbc"></div>
<div class="abs" style="left:3px;top:33px;width:1px;height:371px;background:#bcbcbc"></div>
<div class="abs" style="left:4px;top:34px;width:43px;height:354px;background:#f1f1f1"></div>
<div class="abs" style="left:652px;top:34px;width:1px;height:354px;background:#d4d4d4"></div>
<div id="code" class="abs">
<div class="l" style="top:0.90px"><span class="n">127</span><span class="c"><b>end</b>;</span></div>
<div class="l" style="top:16.84px"><span class="n">128</span><span class="c"></span></div>
<div class="l" style="top:32.78px"><span class="n">129</span><span class="c"><b>procedure</b> GLabel30OnClickScript(Sender: TObject; XCoord, YCoord: integer);</span></div>
<div class="l" style="top:48.72px"><span class="n">130</span><span class="c"><b>begin</b></span></div>
<div class="l" style="top:64.66px"><span class="n">131</span><span class="c">  RK7.PostOperation(rkoSpecifyTable, 0);</span></div>
<div class="l" style="top:80.60px"><span class="n">132</span><span class="c"><b>end</b>;</span></div>
<div class="l" style="top:96.54px"><span class="n">133</span><span class="c"></span></div>
<div class="l" style="top:112.48px"><span class="n">134</span><span class="c"><b>procedure</b> GLabel31OnClickScript(Sender: TObject; XCoord, YCoord: integer);</span></div>
<div class="l" style="top:128.42px"><span class="n">135</span><span class="c"><b>begin</b></span></div>
<div class="l" style="top:144.36px"><span class="n">136</span><span class="c">  RK7.PostOperation(rkoSpecifyTable, 0);</span></div>
<div class="l" style="top:160.30px"><span class="n">137</span><span class="c"><b>end</b>;</span></div>
<div class="l" style="top:176.24px"><span class="n">138</span><span class="c"></span></div>
<div class="l" style="top:192.18px"><span class="n">139</span><span class="c"><b>procedure</b> userGPanelComment_1OnClickScript(Sender: TObject; XCoord, YCoord: integer);</span></div>
<div class="l" style="top:208.12px"><span class="n">140</span><span class="c"><b>begin</b></span></div>
<div class="l" style="top:224.06px"><span class="n">141</span><span class="c">  RK7.PostOperation(rkoSpecifyTable, 0);</span></div>
<div class="l" style="top:240.00px"><span class="n">142</span><span class="c"><b>end</b>;</span></div>
<div class="l" style="top:255.94px"><span class="n">143</span><span class="c"></span></div>
<div class="l" style="top:271.88px"><span class="n">144</span><span class="c"><b>procedure</b> CheckViewOnOrderVerify(Sender: TObject; AVerifyType: TVerifyType; oper: integer);</span></div>
<div class="l" style="top:287.82px"><span class="n">145</span><span class="c"><b>begin</b></span></div>
<div class="l" style="top:303.76px"><span class="n">146</span><span class="c"> <b>if</b> AVerifyType = vtAfterPay <b>then</b></span></div>
<div class="l" style="top:319.70px"><span class="n">147</span><span class="c"> CheckLoyaltyOnAuthorization;</span></div>
<div class="l" style="top:335.64px"><span class="n">148</span><span class="c"><b>end</b>;</span></div>
</div>
<div class="abs" style="left:4px;top:388px;width:685px;height:16.500px;background:#f0f0f0"></div>
<div class="abs" style="left:20.500px;top:388px;width:64.500px;height:15px;background:#cdcdcd"></div>
<svg width="40" height="410"><path d="M14.300 391.400l-3.800 3.800 3.800 3.800" stroke="#404040" stroke-width="1.7" fill="none"/></svg>
<div class="abs" style="left:4px;top:404.500px;width:685px;height:1px;background:#b4b4b4"></div>
<div class="abs" style="left:0;top:405.500px;width:689px;height:6px;background:#f0f0f0"></div>
<div class="abs" style="left:0;top:407.500px;width:689px;height:1px;background:#dcdcdc"></div>
</div>
<!--ANNOT-->
<svg width="1136" height="855" viewBox="0 0 1136 855">
<path d="M0 155H448V533H0" fill="none" stroke="#ed1c24" stroke-width="2"/>
<rect x="496.500" y="755" width="633" height="77.500" fill="none" stroke="#ed1c24" stroke-width="2"/>
<rect x="581" y="104.500" width="149" height="19" rx="9.500" fill="none" stroke="#ed1c24" stroke-width="1.4"/>
<rect x="654.500" y="126.500" width="62" height="22.500" rx="5" fill="none" stroke="#ed1c24" stroke-width="1.4"/>
<path d="M307.7 311.5L570.7 130.0" stroke="#ed1c24" stroke-width="1.6" fill="none"/><path d="M580.6 123.2L574.8 136.0L566.6 124.0z" fill="#ed1c24"/>
<path d="M688.0 153.7L706.5 348.1" stroke="#ed1c24" stroke-width="1.6" fill="none"/><path d="M707.7 360.4L700.2 348.7L712.9 347.4z" fill="#ed1c24"/>
<path d="M670.3 375.6L676.3 375.6" stroke="#ed1c24" stroke-width="1.6" fill="none"/><path d="M690.0 375.6L676.3 382.6L676.3 368.6z" fill="#ed1c24"/>
<path d="M704.6 390.3L625.4 726.0" stroke="#ed1c24" stroke-width="1.6" fill="none"/><path d="M622.4 738.7L618.7 724.5L632.1 727.6z" fill="#ed1c24"/>
<text x="106" y="320.500" font-family="'DejaVu Sans Condensed','DejaVu Sans',sans-serif" font-weight="bold" font-size="18" letter-spacing="-0.17" fill="#ed1c24">Click on white coner</text>
<text x="694" y="378.300" font-family="'DejaVu Sans',sans-serif" font-weight="bold" font-size="12.5" fill="#ed1c24">Dowble click</text>
</svg>
</div>
</body>
</html>
